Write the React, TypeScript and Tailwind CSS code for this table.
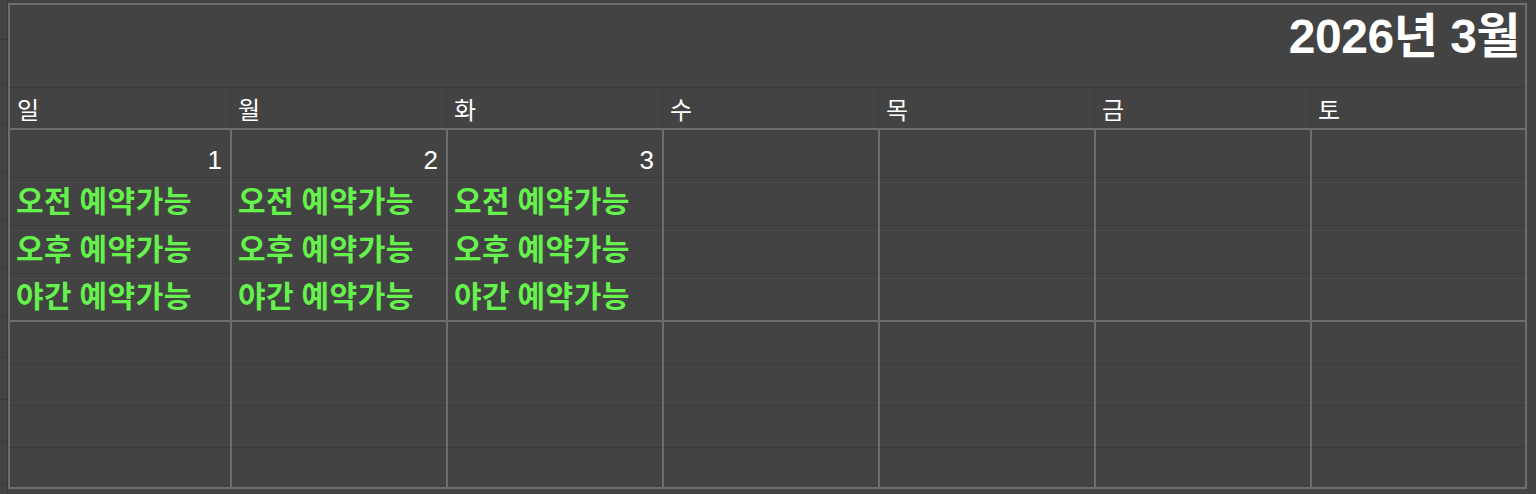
import React from "react";

const DAYS = ["일", "월", "화", "수", "목", "금", "토"];
const SLOTS = ["오전 예약가능", "오후 예약가능", "야간 예약가능"];
const SLOT_H = ["h-[48px]", "h-[48px]", "h-[46px]"];

function Week({ dates, withSlots }: { dates: (number | null)[]; withSlots: boolean }) {
  return (
    <div className="grid grid-cols-[220px_repeat(5,216px)_1fr] border-t-2 border-[#6e6e6e]">
      {dates.map((d, i) => (
        <div key={i} className={i === 0 ? "flex flex-col" : "flex flex-col border-l-2 border-[#6e6e6e]"}>
          {withSlots ? (
            <>
              <div className="h-[48px] border-b border-[#3a3a3a] flex items-start justify-end pr-[8px] pt-[18px] font-['Liberation_Sans',sans-serif] text-[26px] leading-[25px] text-white">
                {d ?? ""}
              </div>
              {SLOTS.map((s, j) => (
                <div
                  key={s}
                  className={
                    SLOT_H[j] +
                    " border-b border-[#3a3a3a] last:border-b-0 flex items-center pl-[6px] pb-[6px] font-['Noto_Sans_CJK_KR',sans-serif] font-bold text-[30px] leading-none text-[#66f24d] whitespace-nowrap tracking-[0.5px]"
                  }
                >
                  {d ? s : ""}
                </div>
              ))}
            </>
          ) : (
            <>
              <div className="h-[42px] border-b border-[#3a3a3a]" />
              <div className="h-[42px] border-b border-[#3a3a3a]" />
              <div className="h-[42px] border-b border-[#3a3a3a]" />
              <div className="h-[41px]" />
            </>
          )}
        </div>
      ))}
    </div>
  );
}

export default function App() {
  const strip = [40, 44, 41, 48, 48, 48, 47, 42, 42, 42, 42];
  return (
    <div className="w-[1536px] h-[494px] bg-[#434343] flex overflow-hidden">
      <div className="w-[8px] flex flex-col shrink-0 border-r border-[#3a3a3a]">
        {strip.map((h, i) => (
          <div key={i} style={{ height: h }} className="border-b border-[#3a3a3a] shrink-0" />
        ))}
      </div>
      <div className="mt-[3px] w-[1519px] h-[486px] shrink-0 border-2 border-[#6e6e6e] flex flex-col">
        <div className="h-[83px] shrink-0 border-b border-[#3a3a3a] flex items-start justify-end pr-[5px] pt-[8px]">
          <span className="font-['Liberation_Sans','Noto_Sans_CJK_KR',sans-serif] font-bold text-[48px] leading-none text-white tracking-[-0.5px]">
            2026년 3월
          </span>
        </div>
        <div className="grid grid-cols-[220px_repeat(5,216px)_1fr] h-[40px] shrink-0">
          {DAYS.map((d, i) => (
            <div
              key={d}
              className={
                (i === 0 ? "" : "border-l border-[#3a3a3a] ") +
                "flex items-center pl-[7px] pt-[2px] font-['Noto_Sans_CJK_KR',sans-serif] text-[24px] leading-none text-white"
              }
            >
              {d}
            </div>
          ))}
        </div>
        <Week dates={[1, 2, 3, null, null, null, null]} withSlots />
        <Week dates={[null, null, null, null, null, null, null]} withSlots={false} />
      </div>
    </div>
  );
}
